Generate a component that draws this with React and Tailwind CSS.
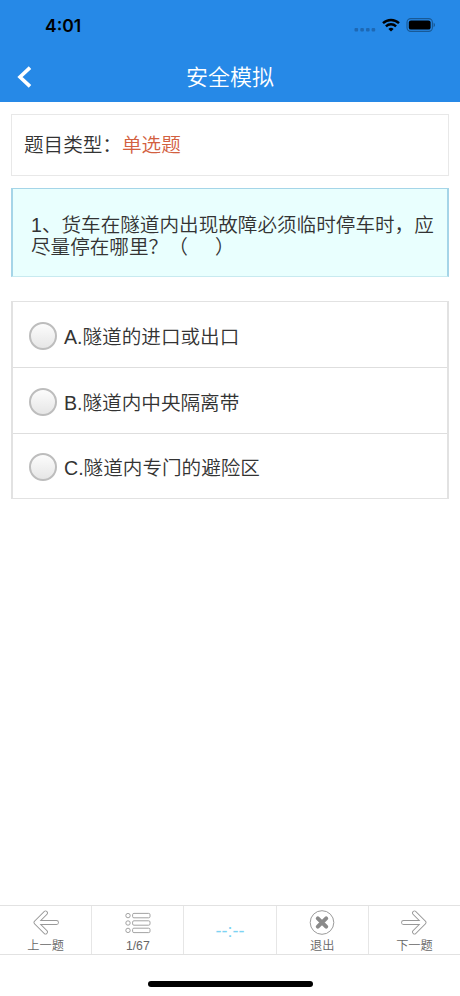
const options = [
  { key: 'A', text: '隧道的进口或出口' },
  { key: 'B', text: '隧道内中央隔离带' },
  { key: 'C', text: '隧道内专门的避险区' },
]

function StatusBar() {
  return (
    <div className="flex h-[52px] items-center justify-between pl-[45px] pr-[24px] text-black">
      <span className="font-['Inter'] text-[17.5px] font-semibold leading-none">4:01</span>
      <div className="flex items-center">
        <svg width="22" height="4" viewBox="0 0 22 4" className="mt-[8px]" fill="#1d68b4">
          <rect x="0.5" y="0" width="3.6" height="3.6" rx="1" />
          <rect x="6.3" y="0" width="3.6" height="3.6" rx="1" />
          <rect x="12" y="0" width="3.6" height="3.6" rx="1" />
          <rect x="17.6" y="0" width="3.6" height="3.6" rx="1" />
        </svg>
        <svg width="18" height="14" viewBox="0 0 18 14" className="ml-[6px] mt-[-2px]" fill="none" stroke="#000" strokeWidth="2.4">
          <path d="M1 5.2a11.6 11.6 0 0 1 16 0" />
          <path d="M3.9 8.3a7.4 7.4 0 0 1 10.2 0" />
          <path d="M9 13.6 6.4 11a3.8 3.8 0 0 1 5.2 0z" fill="#000" stroke="none" />
        </svg>
        <svg width="30" height="14" viewBox="0 0 30 14" className="ml-[6px] mt-[-2px]">
          <rect x="1" y="0.6" width="25.4" height="12.8" rx="3.8" fill="none" stroke="#185996" strokeWidth="1.1" />
          <rect x="2.8" y="2.4" width="21.8" height="9.2" rx="2.2" fill="#000" />
          <path d="M27.6 4.8v4.4c.9-.4 1.4-1.2 1.4-2.2s-.5-1.8-1.4-2.2z" fill="#185996" />
        </svg>
      </div>
    </div>
  )
}

function ArrowIcon({ flip }) {
  const d = 'M24.5 12.5H5.5M13.5 3L4 12.5L13.5 22'
  return (
    <svg width="28" height="25" viewBox="0 0 28 25" fill="none" strokeLinecap="round" strokeLinejoin="round" className={flip ? 'shrink-0 rotate-180' : 'shrink-0'}>
      <path d={d} stroke="#999" strokeWidth="4.8" />
      <path d={d} stroke="#fff" strokeWidth="3.1" />
    </svg>
  )
}

function ListIcon() {
  return (
    <svg width="26" height="25" viewBox="0 0 26 25" fill="none" stroke="#999" strokeWidth="0.9" className="shrink-0">
      {[5.6, 13, 20.4].map((y) => (
        <g key={y}>
          <circle cx="3" cy={y} r="2.2" />
          <rect x="7.6" y={y - 2.2} width="17.4" height="4.4" rx="1.3" />
        </g>
      ))}
    </svg>
  )
}

function CloseIcon() {
  return (
    <svg width="26" height="25" viewBox="0 0 26 25" fill="none" className="shrink-0">
      <circle cx="13" cy="12.5" r="11.8" stroke="#8f8f8f" strokeWidth="0.9" />
      <path d="M8.8 8.3l8.4 8.4M17.2 8.3l-8.4 8.4" stroke="#8a8a8a" strokeWidth="4" strokeLinecap="round" />
    </svg>
  )
}

function TabItem({ icon, label }) {
  return (
    <button className="flex h-full flex-1 flex-col items-center border-r border-[#e6e6e6] pt-[4px] last:border-r-0">
      {icon}
      <span className="pt-[2px] text-[12.2px] leading-[18px] text-[#666]">{label}</span>
    </button>
  )
}

export default function App() {
  return (
    <div className="flex h-[996px] w-[460px] flex-col bg-white font-['Liberation_Sans','Noto_Sans_CJK_SC',sans-serif] font-[350] text-[#333]">
      <header className="h-[102px] bg-[#2689e7]">
        <StatusBar />
        <div className="grid h-[50px] grid-cols-[60px_1fr_60px] items-center">
          <button className="pl-[17px]">
            <svg width="15" height="22" viewBox="0 0 15 22" fill="none" stroke="#fff" strokeWidth="3.6">
              <path d="M13 1.6L3 11l10 9.4" />
            </svg>
          </button>
          <h1 className="pt-[2px] text-center text-[22px] font-[350] leading-none text-white">安全模拟</h1>
        </div>
      </header>

      <main className="flex-1 px-[11px] pt-[12px]">
        <div className="flex h-[62px] items-center border border-[#e8e8e8] pl-[12px] pt-[2px] text-[19.6px]">
          <span>题目类型：</span>
          <span className="text-[#d2603f]">单选题</span>
        </div>

        <div className="mt-[12px] h-[89px] border border-x-2 border-[#a5d5e8] border-b-[#c8eaf0] bg-[#e9fffe] pl-[18px] pt-[25px] text-[19.6px] leading-[23px]">
          <p>1、货车在隧道内出现故障必须临时停车时，应</p>
          <p className="mt-[-1px] whitespace-pre">尽量停在哪里？（     ）</p>
        </div>

        <ul className="mt-[24px] border-x-2 border-y border-[#e2e2e2]">
          {options.map((option) => (
            <li key={option.key} className="flex h-[66px] items-center border-b border-[#dedede] pl-[16px] pt-[2px] last:h-[64px] last:border-b-0">
              <span className="size-[28px] rounded-full border-2 border-[#bdbdbd] bg-linear-to-b from-[#fcfcfc] to-[#e6e6e6]" />
              <span className="ml-[7px] pt-[4px] text-[19.6px] leading-none">{option.key}.{option.text}</span>
            </li>
          ))}
        </ul>
      </main>

      <nav className="flex h-[50px] border-y border-[#e2e2e2]">
        <TabItem icon={<ArrowIcon />} label="上一题" />
        <TabItem icon={<ListIcon />} label="1/67" />
        <div className="flex flex-1 items-center justify-center border-r border-[#e6e6e6] pt-[2px] text-[18px] text-[#7dd3f3]">--:--</div>
        <TabItem icon={<CloseIcon />} label="退出" />
        <TabItem icon={<ArrowIcon flip />} label="下一题" />
      </nav>
      <div className="flex h-[41px] justify-center pt-[26px]">
        <div className="h-[6px] w-[165px] rounded-full bg-black" />
      </div>
    </div>
  )
}
